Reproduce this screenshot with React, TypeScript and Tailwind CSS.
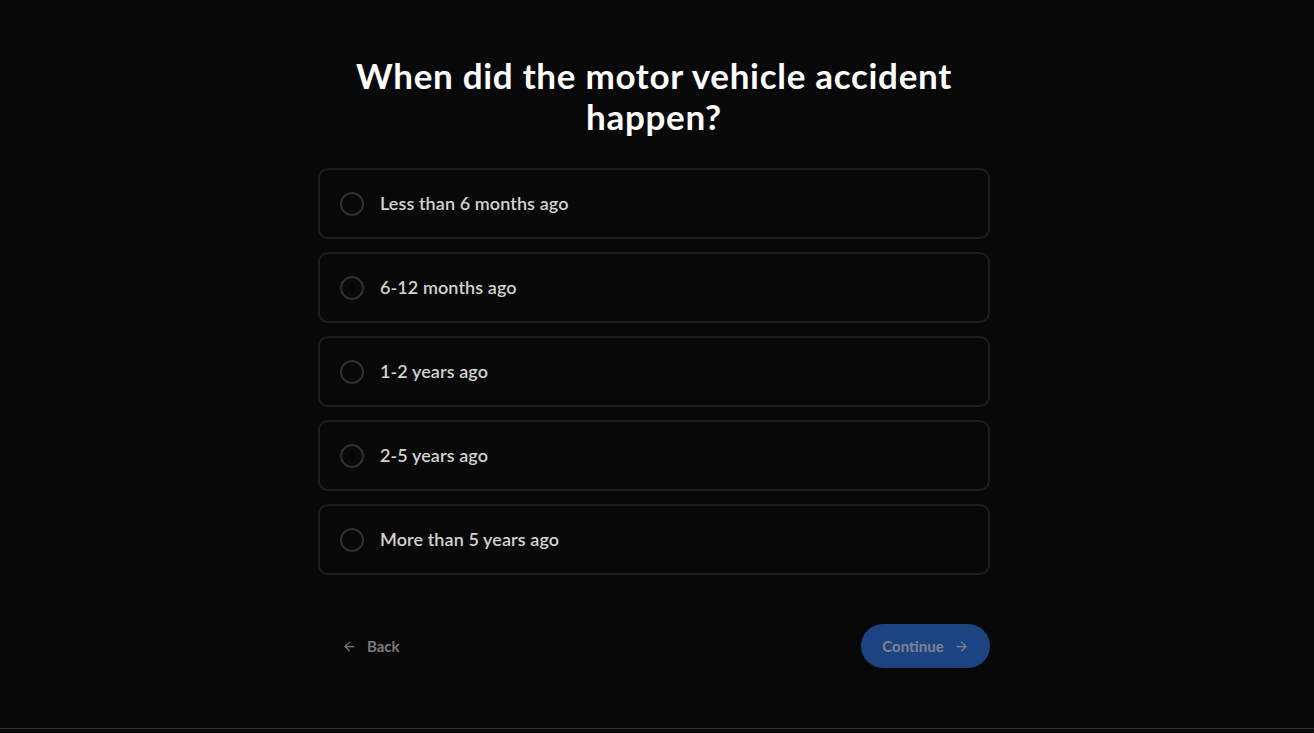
import { ArrowLeft, ArrowRight } from "lucide-react";
import { useState } from "react";

const options = [
  "Less than 6 months ago",
  "6-12 months ago",
  "1-2 years ago",
  "2-5 years ago",
  "More than 5 years ago",
];

export default function App() {
  const [selected, setSelected] = useState<number | null>(null);

  return (
    <div
      className="min-h-[733px] bg-[#080808] text-white"
      style={{ fontFamily: "Lato, 'Open Sans', sans-serif" }}
    >
      <div className="flex h-[729px] flex-col items-center border-b border-[#2e2e2e]">
        <div className="mr-[6px] w-[672px] pt-[55px]">
          <h1 className="mx-auto max-w-[640px] text-center text-[35px] font-bold leading-[41px] tracking-[0.02em] text-white">
            When did the motor vehicle accident happen?
          </h1>

          <div className="mt-[31px] flex flex-col gap-[13px]">
            {options.map((label, i) => (
              <button
                key={label}
                type="button"
                onClick={() => setSelected(i)}
                className="flex h-[71px] items-center gap-[16px] rounded-[10px] border-2 border-[#1e1e1e] bg-[#080808] px-[20px] text-left"
              >
                <span className="flex h-[24px] w-[24px] items-center justify-center rounded-full border-2 border-[#2f2f2f]">
                  {selected === i && <span className="h-[10px] w-[10px] rounded-full bg-[#2a5bb0]" />}
                </span>
                <span className="text-[18px] font-semibold tracking-[0.005em] text-[#d2d2d2]">{label}</span>
              </button>
            ))}
          </div>

          <div className="mt-[49px] flex items-center justify-between">
            <button type="button" className="flex items-center gap-[10px] pl-[24px] text-[15px] font-bold text-[#7a7a7a]">
              <ArrowLeft className="h-[15px] w-[15px]" strokeWidth={2} />
              Back
            </button>
            <button
              type="button"
              className="flex h-[44px] w-[129px] items-center justify-center gap-[10px] rounded-full bg-[#1d4482] text-[15px] font-bold text-[#7d8491]"
            >
              Continue
              <ArrowRight className="h-[15px] w-[15px]" strokeWidth={2} />
            </button>
          </div>
        </div>
      </div>
    </div>
  );
}
